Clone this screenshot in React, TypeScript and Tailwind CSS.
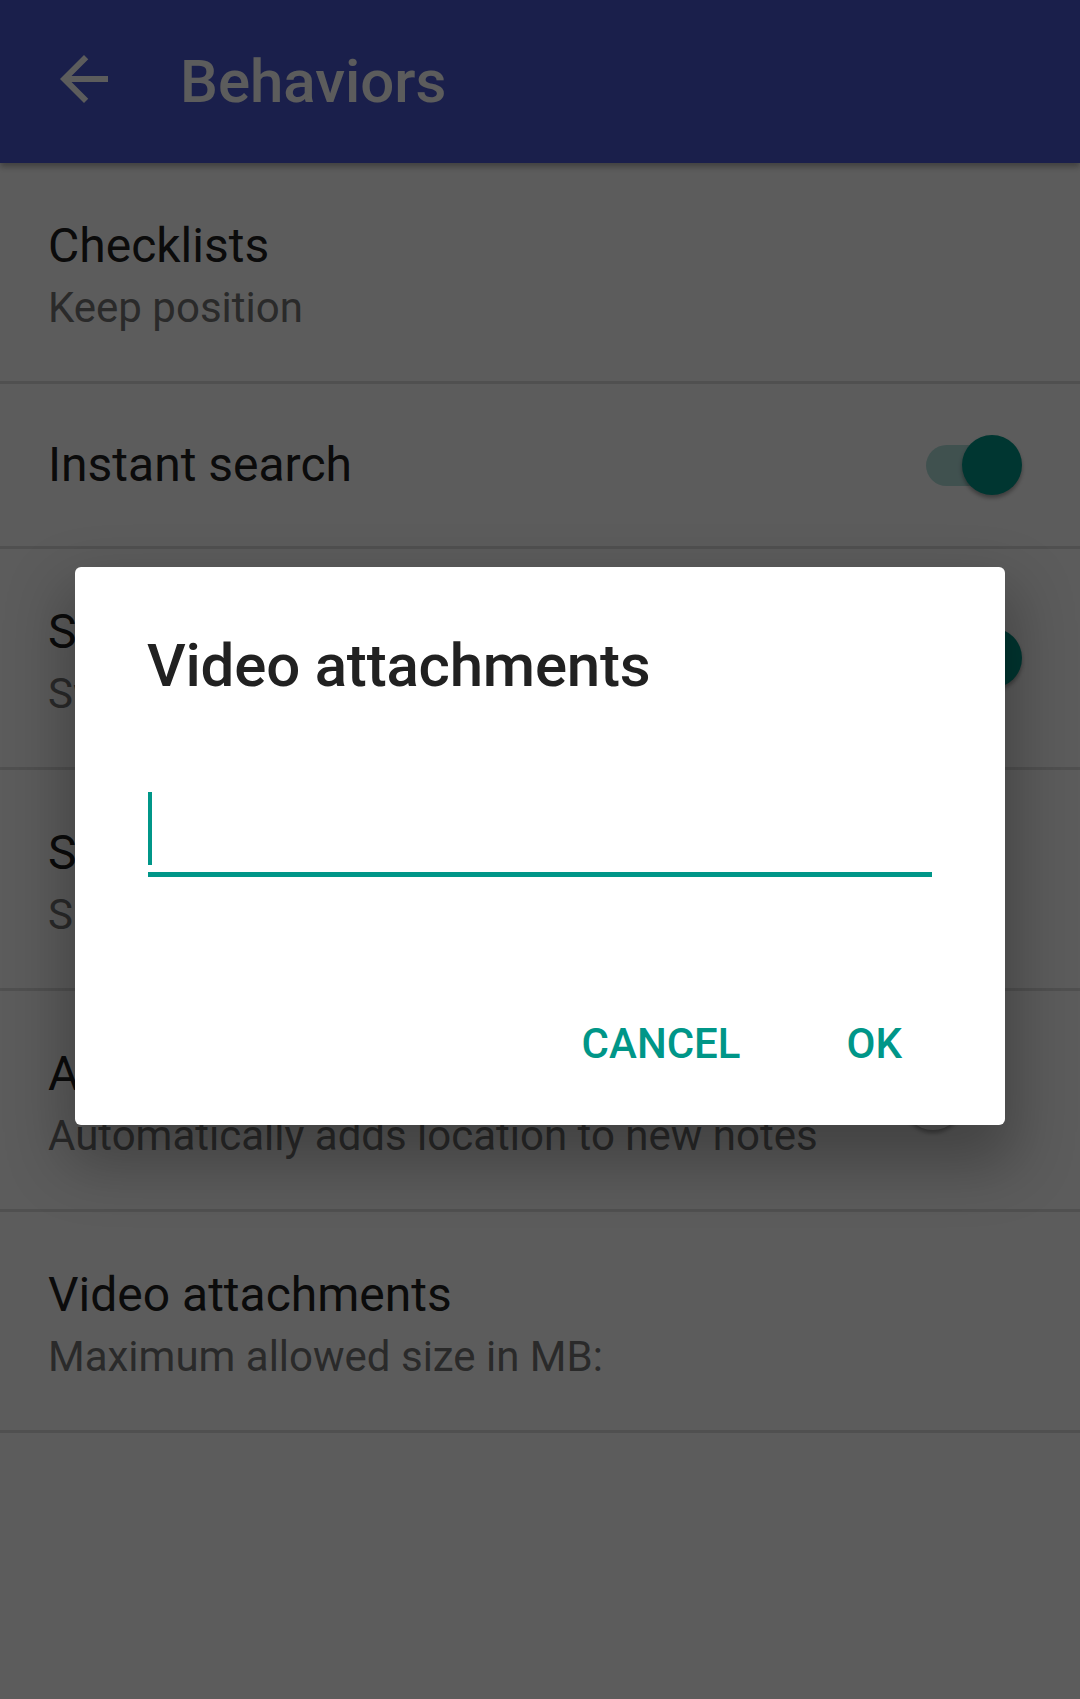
import React from "react";

type Row = {
  title: string;
  summary?: string;
  toggle?: "on" | "off";
};

const rows: Row[] = [
  { title: "Checklists", summary: "Keep position" },
  { title: "Instant search", toggle: "on" },
  { title: "Swipe to trash", summary: "Swipe notes left or right to trash them", toggle: "on" },
  { title: "Show uncategorized notes", summary: "Show notes without category in the list" },
  { title: "Auto-location", summary: "Automatically adds location to new notes", toggle: "off" },
  { title: "Video attachments", summary: "Maximum allowed size in MB:" },
];

function Toggle({ on }: { on: boolean }) {
  return (
    <div className="relative w-[96px] h-[60px] mr-[58px]">
      <div
        className={
          on
            ? "absolute left-0 top-[10px] w-[74px] h-[41px] rounded-full bg-[#b2dfdb]"
            : "absolute left-0 top-[10px] w-[74px] h-[41px] rounded-full bg-[#bdbdbd]"
        }
      />
      <div
        className={
          on
            ? "absolute right-0 top-0 w-[60px] h-[60px] rounded-full bg-[#009688] shadow-[0_3px_4px_rgba(0,0,0,0.35)]"
            : "absolute left-[-23px] top-0 w-[60px] h-[60px] rounded-full bg-[#fafafa] shadow-[0_3px_4px_rgba(0,0,0,0.35)]"
        }
      />
    </div>
  );
}

function SettingRow({ row }: { row: Row }) {
  if (!row.summary) {
    return (
      <div className="flex items-center justify-between h-[165px] border-b-[3px] border-[#dedede] pl-12">
        <span className="text-[48px] leading-[64px] text-[#212121]">{row.title}</span>
        {row.toggle ? <Toggle on={row.toggle === "on"} /> : null}
      </div>
    );
  }
  return (
    <div className="flex items-center justify-between h-[221px] border-b-[3px] border-[#dedede] pl-12">
      <div className="flex flex-col self-start pt-[51px]">
        <span className="text-[48px] leading-[64px] text-[#212121]">{row.title}</span>
        <span className="mt-[2px] text-[42px] leading-[56px] text-[#757575]">{row.summary}</span>
      </div>
      {row.toggle ? <Toggle on={row.toggle === "on"} /> : null}
    </div>
  );
}

export default function App() {
  return (
    <div className="relative w-[1080px] h-[1699px] overflow-hidden bg-white font-['Roboto',sans-serif]">
      <header className="relative z-10 flex items-center h-[163px] bg-[#4a57cf] shadow-[0_4px_6px_rgba(0,0,0,0.3)] pl-[48px]">
        <svg width="72" height="72" viewBox="0 0 24 24" className="fill-white -mt-[5px]">
          <path d="M20 11H7.83l5.59-5.59L12 4l-8 8 8 8 1.41-1.41L7.83 13H20v-2z" />
        </svg>
        <h1 className="ml-[60px] text-[60px] leading-[60px] font-medium text-white">Behaviors</h1>
      </header>

      <div className="flex flex-col">
        {rows.map((row) => (
          <SettingRow key={row.title} row={row} />
        ))}
      </div>

      {/* dim overlay */}
      <div className="absolute inset-0 z-20 bg-black/64" />

      {/* dialog */}
      <div className="absolute z-30 left-[75px] top-[567px] w-[930px] h-[558px] rounded-[6px] bg-white shadow-[0_30px_60px_10px_rgba(0,0,0,0.28)] flex flex-col">
        <h2 className="pl-[72px] pt-[63px] text-[60px] leading-[72px] font-medium tracking-[-0.2px] text-[#212121]">
          Video attachments
        </h2>
        <div className="mx-[73px] mt-[90px] pb-[7px] border-b-[5px] border-[#009688]">
          <div className="w-[4px] h-[73px] bg-[#009688]" />
        </div>
        <div className="flex justify-end gap-[106px] pr-[103px] mt-[143px]">
          <span className="text-[42px] leading-[48px] font-medium text-[#009688]">CANCEL</span>
          <span className="text-[42px] leading-[48px] font-medium text-[#009688]">OK</span>
        </div>
      </div>
    </div>
  );
}
